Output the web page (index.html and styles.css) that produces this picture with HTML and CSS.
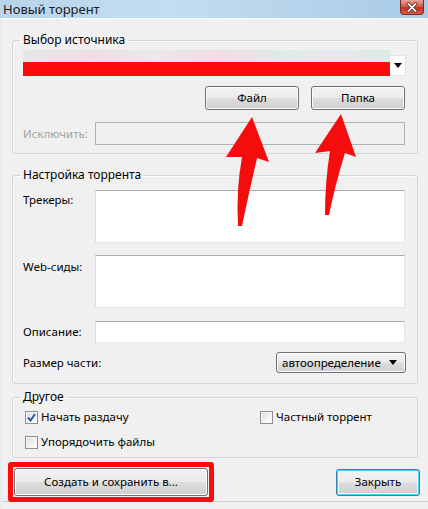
FILE: index.html
```html
<!DOCTYPE html>
<html lang="ru">
<head>
<meta charset="utf-8">
<title>Новый торрент</title>
<link rel="stylesheet" href="styles.css">
</head>
<body>
<div class="window">
  <div class="titlebar">
    <span class="title">Новый торрент</span>
    <div class="close">
      <svg width="24" height="15" viewBox="0 0 24 15"><path d="M8 3.5 L16 11.5 M16 3.5 L8 11.5" stroke="#5a1a14" stroke-width="3.6" stroke-linecap="round"/><path d="M8 3.5 L16 11.5 M16 3.5 L8 11.5" stroke="#fff" stroke-width="2" stroke-linecap="round"/></svg>
    </div>
  </div>
  <div class="content">
    <fieldset class="group g-source">
      <legend>Выбор источника</legend>
      <div class="combo">
        <div class="combo-field">
          <div class="redact-top"></div>
          <div class="redact-red"></div>
        </div>
        <div class="combo-btn"><svg width="8" height="5" viewBox="0 0 8 5"><path d="M0 0 H8 L4 5 Z" fill="#000"/></svg></div>
      </div>
      <div class="btn-row">
        <button class="btn btn-file">Файл</button>
        <button class="btn btn-folder">Папка</button>
      </div>
      <div class="row row-exclude">
        <span class="lbl lbl-disabled">Исключить:</span>
        <div class="input input-disabled"></div>
      </div>
    </fieldset>

    <fieldset class="group g-torrent">
      <legend>Настройка торрента</legend>
      <div class="row row-area">
        <span class="lbl lbl-top">Трекеры:</span>
        <div class="input area"></div>
      </div>
      <div class="row row-area row-web">
        <span class="lbl lbl-top2">Web-сиды:</span>
        <div class="input area"></div>
      </div>
      <div class="row row-desc">
        <span class="lbl">Описание:</span>
        <div class="input line"></div>
      </div>
      <div class="row-size">
        <span class="lbl">Размер части:</span>
        <div class="select">
          <span>автоопределение</span>
          <svg width="8" height="5" viewBox="0 0 8 5"><path d="M0 0 H8 L4 5 Z" fill="#000"/></svg>
        </div>
      </div>
    </fieldset>

    <fieldset class="group g-other">
      <legend>Другое</legend>
      <div class="checks">
        <label class="check"><span class="box checked"><svg width="9" height="9" viewBox="0 0 9 9"><path d="M1 4.5 L3.5 7.5 L8 1" fill="none" stroke="#2c5aa8" stroke-width="2"/></svg></span>Начать раздачу</label>
        <label class="check"><span class="box"></span>Частный торрент</label>
        <label class="check check-2"><span class="box"></span>Упорядочить файлы</label>
      </div>
    </fieldset>

    <div class="bottom">
      <div class="highlight">
        <button class="btn btn-create">Создать и сохранить в...</button>
      </div>
      <button class="btn btn-close">Закрыть</button>
    </div>
    <div class="bottom-line"></div>
  </div>

  <svg class="arrows" width="428" height="509" viewBox="0 0 428 509">
    <defs>
      <filter id="soft" x="-20%" y="-20%" width="140%" height="140%"><feGaussianBlur stdDeviation="0.6"/></filter>
    </defs>
    <g fill="#f50a0a" filter="url(#soft)">
      <path d="M252 117 L269 162 L257 158 Q249 192 242 226 L238 226 Q236 190 242 157 L226 157 Z"/>
      <path d="M341 114 L356 157 L345 153 Q335 185 329 215 L325 215 Q325 182 330 151 L315 153 Z"/>
    </g>
  </svg>
</div>
</body>
</html>
```

FILE: styles.css
```css
* { box-sizing: border-box; }

html, body {
  margin: 0;
  padding: 0;
  background: #f0f0f0;
}

body {
  font-family: "Noto Sans", "Open Sans", sans-serif;
  font-size: 11.5px;
  color: #000;
}

.window {
  position: relative;
  width: 428px;
  height: 509px;
  overflow: hidden;
  background: #f0f0f0;
}

.titlebar {
  height: 18px;
  background: linear-gradient(to right, #b9d5ec 0%, #c3dcef 40%, #b2d1ea 80%, #a8cbe6 100%);
  display: flex;
  align-items: center;
  justify-content: space-between;
  padding-left: 3px;
  padding-right: 4px;
}

.title {
  font-size: 13px;
  color: #1b1b1b;
  line-height: 16px;
}

.close {
  width: 24px;
  height: 15px;
  align-self: flex-start;
  border-radius: 0 0 4px 4px;
  background: linear-gradient(to bottom, #e8a598 0%, #d25d4c 45%, #c4321f 55%, #d8604a 100%);
  border: 1px solid #7a2a22;
  border-top: none;
  display: flex;
  align-items: center;
  justify-content: center;
}

.close svg { display: block; }

.content {
  border-left: 2px solid #e3ebf3;
  border-top: 1px solid #f8fbfd;
  height: 491px;
}

.group {
  margin: 0 10px 0 10px;
  padding: 0 11px 0 10px;
  border: 1px solid #d5d5d5;
  border-radius: 3px;
  box-shadow: inset 1px 1px 0 #fbfbfb;
  min-width: 0;
}

.group legend {
  padding: 0 3px;
  margin-left: -3px;
  line-height: 16px;
  height: 16px;
  font-size: 12px;
  color: #000;
}

.g-source {
  margin-top: 13px;
  padding-top: 2px;
  padding-bottom: 8px;
}

.combo {
  display: flex;
  height: 26px;
}

.combo-field {
  flex: 1;
  display: flex;
  flex-direction: column;
}

.redact-top {
  height: 12px;
  background: linear-gradient(to right, #e7e7ea 0%, #ecdfe3 20%, #e9e9ec 35%, #f1dde2 55%, #dcede8 70%, #e8e8ec 85%, #d9ede6 100%);
}

.redact-red {
  height: 14px;
  background: #fd0a0a;
}

.combo-btn {
  width: 16px;
  height: 21px;
  margin-top: 5px;
  background: #fff;
  border: 1px solid #e2e3ea;
  border-left: none;
  display: flex;
  align-items: center;
  justify-content: center;
}

.combo-btn svg, .select svg { display: block; }

.btn {
  font-family: inherit;
  font-size: 11.5px;
  color: #000;
  border: 1px solid #707070;
  border-radius: 3px;
  background: linear-gradient(to bottom, #f2f2f2 0%, #ebebeb 48%, #dddddd 52%, #cfcfcf 100%);
  box-shadow: inset 0 0 0 1px #fcfcfc;
  padding: 0;
  line-height: 16px;
}

.btn-row {
  display: flex;
  justify-content: flex-end;
  gap: 12px;
  margin-top: 10px;
  padding-right: 1px;
}

.btn-file, .btn-folder {
  width: 94px;
  height: 24px;
}

.row {
  display: grid;
  grid-template-columns: 72px 1fr;
  align-items: center;
}

.row-exclude {
  margin-top: 12px;
}

.lbl {
  line-height: 16px;
  white-space: nowrap;
}

.lbl-disabled {
  color: #a3a3a3;
}

.input {
  background: #fff;
  border: 1px solid;
  border-color: #abadb3 #e2e3ea #e3e9ef #dbdfe6;
  margin-right: 1px;
}

.input-disabled {
  height: 23px;
  background: #f0f0f0;
  border-color: #adb2b5;
}

.g-torrent {
  margin-top: 13px;
  padding-top: 7px;
  padding-bottom: 10px;
}

.row-area {
  align-items: start;
}

.area {
  height: 53px;
}

.lbl-top { padding-top: 2px; }
.lbl-top2 { padding-top: 4px; }

.row-web { margin-top: 12px; }

.row-desc { margin-top: 13px; }

.line { height: 22px; }

.row-size {
  margin-top: 9px;
  display: flex;
  justify-content: space-between;
  align-items: center;
}

.select {
  width: 130px;
  height: 21px;
  border: 1px solid #707070;
  border-radius: 3px;
  background: linear-gradient(to bottom, #f2f2f2 0%, #ebebeb 48%, #dddddd 52%, #cfcfcf 100%);
  box-shadow: inset 0 0 0 1px #fcfcfc;
  display: flex;
  align-items: center;
  justify-content: space-between;
  padding: 0 8px 0 5px;
  line-height: 16px;
}

.g-other {
  margin-top: 5px;
  padding-top: 4px;
  padding-bottom: 7px;
}

.checks {
  display: grid;
  grid-template-columns: 235px 1fr;
  row-gap: 9px;
}

.check {
  display: flex;
  align-items: center;
  line-height: 16px;
  padding-left: 2px;
  gap: 3px;
}

.check-2 {
  grid-column: 1;
}

.box {
  width: 13px;
  height: 13px;
  border: 1px solid #8e8f8f;
  background: linear-gradient(135deg, #dcdcdc 0%, #f4f4f4 60%, #ffffff 100%);
  box-shadow: inset 0 0 0 1px #f4f4f4;
  display: flex;
  align-items: center;
  justify-content: center;
  flex: none;
}

.box svg { display: block; }

.bottom {
  margin-top: 4px;
  padding-left: 6px;
  padding-right: 8px;
  display: flex;
  justify-content: space-between;
  align-items: center;
}

.highlight {
  width: 206px;
  height: 40px;
  border: 5px solid #fd0a0a;
  border-radius: 3px;
  padding: 1px;
}

.btn-create {
  width: 194px;
  height: 28px;
  display: block;
}

.btn-close {
  width: 84px;
  height: 27px;
  border-color: #3c7fb1;
  box-shadow: inset 0 0 0 1px #48d4f9, inset 0 0 0 2px #f0fbfe;
}

.bottom-line {
  margin-top: -1px;
  height: 1px;
  background: #d0d0d0;
}

.arrows {
  position: absolute;
  left: 0;
  top: 0;
  pointer-events: none;
}
```
